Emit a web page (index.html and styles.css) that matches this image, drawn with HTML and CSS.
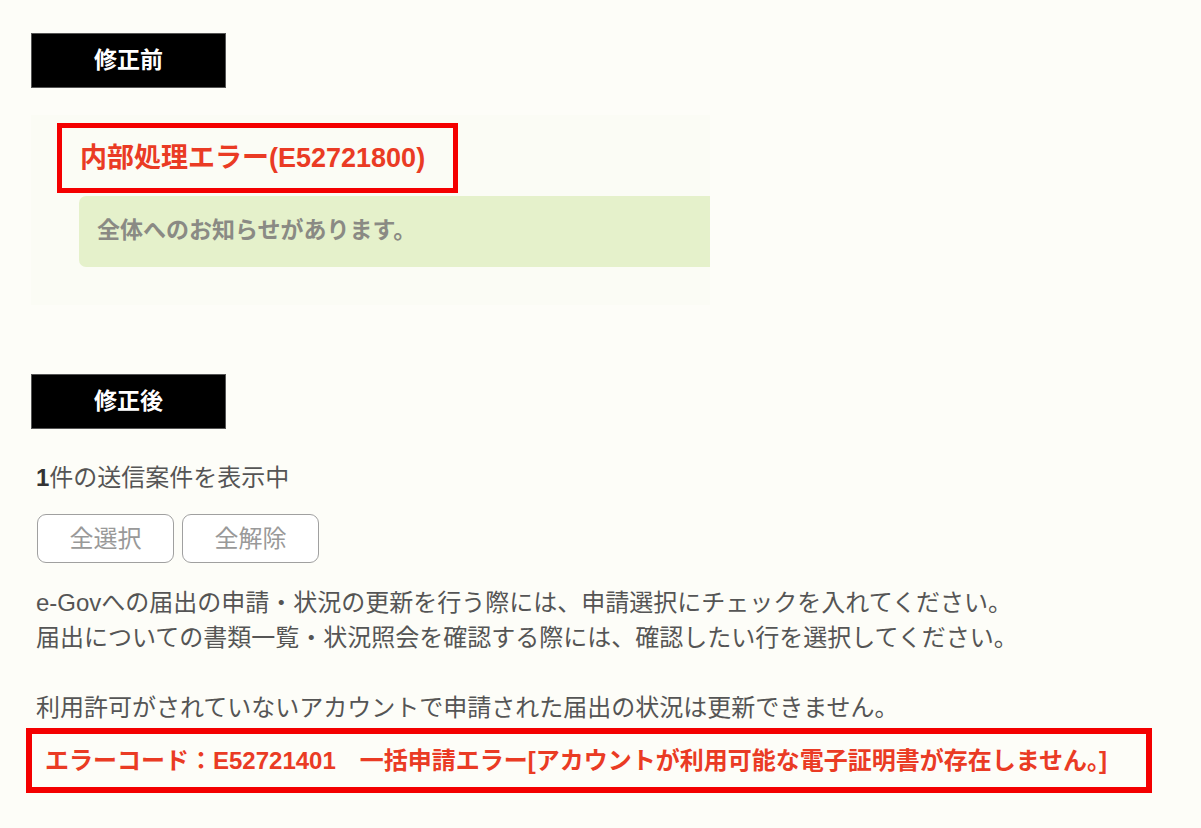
FILE: index.html
```html
<!DOCTYPE html>
<html lang="ja">
<head>
<meta charset="UTF-8">
<meta name="viewport" content="width=device-width, initial-scale=1.0">
<title>修正前・修正後</title>
<link rel="stylesheet" href="styles.css">
</head>
<body>
<div class="page">
    <!-- 修正前 -->
    <div class="tag">修正前</div>
    <div class="panel">
        <div class="err-box">内部処理エラー(E52721800)</div>
        <div class="notice">全体へのお知らせがあります。</div>
    </div>

    <!-- 修正後 -->
    <div class="tag tag-after">修正後</div>
    <p class="count"><b>1</b>件の送信案件を表示中</p>
    <div class="btns">
        <button class="btn">全選択</button>
        <button class="btn">全解除</button>
    </div>
    <p class="guide">e-Govへの届出の申請・状況の更新を行う際には、申請選択にチェックを入れてください。<br>
    届出についての書類一覧・状況照会を確認する際には、確認したい行を選択してください。<br>
    <br>
    利用許可がされていないアカウントで申請された届出の状況は更新できません。</p>
    <div class="err-line">エラーコード：E52721401　一括申請エラー[アカウントが利用可能な電子証明書が存在しません。]</div>
</div>
</body>
</html>
```

FILE: styles.css
```css
body {margin:0;padding:0;background:#fdfdf8;color:#555;font-family:"Liberation Sans","Noto Sans CJK JP",sans-serif;}
.page {padding:33px 26px 0;}
.tag {width:193px;height:53px;margin-left:5px;background:#000;border:1px solid #555;color:#fff;font-size:23px;font-weight:bold;line-height:53px;text-align:center;}
.tag-after {margin-top:69px;}
.panel {width:653px;margin:27px 0 0 5px;padding:8px 0 38px 26px;background:#fbfcf5;}
.err-box {width:373px;height:60px;border:5px solid #f40000;padding-left:18px;color:#ea3b24;font-size:27px;font-weight:bold;line-height:60px;}
.notice {margin:3px 0 0 22px;height:71px;padding-left:18px;background:#e5f1cb;border-radius:7px 0 0 7px;color:#8a8a84;font-size:23px;font-weight:bold;line-height:69px;}
.count {margin:32px 0 0 10px;font-size:24px;line-height:34px;}
.count b {color:#333;}
.btns {display:flex;gap:8px;margin:19px 0 0 11px;}
.btn {width:137px;height:49px;background:#fff;border:1.5px solid #a0a0a0;border-radius:9px;color:#999;font-family:inherit;font-size:24px;padding:0 0 5px;}
.guide {margin:22px 0 0 10px;font-size:24px;line-height:35px;}
.err-line {width:1101px;height:53px;margin-top:3px;border:6px solid #f40000;padding-left:13px;color:#ea3b24;font-size:24px;font-weight:bold;line-height:53px;white-space:nowrap;}
```
